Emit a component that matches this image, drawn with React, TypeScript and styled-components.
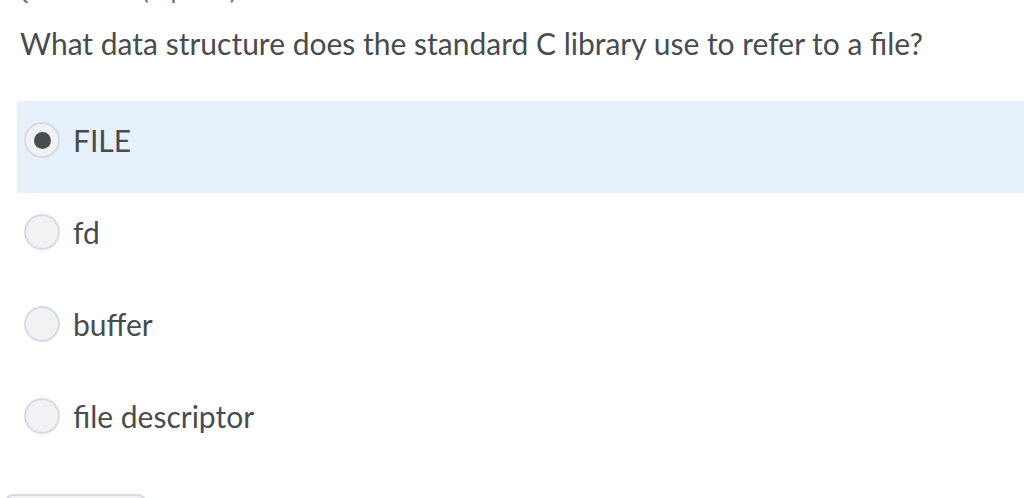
import React, { useState } from 'react';
import styled, { createGlobalStyle } from 'styled-components';

const GlobalStyle = createGlobalStyle`
  html, body {
    margin: 0;
    padding: 0;
    background: #fff;
  }
  body {
    font-family: Lato, "Open Sans", "Liberation Sans", sans-serif;
    color: #494c4e;
    overflow: hidden;
  }
`;

const Page = styled.div`
  width: 1024px;
  height: 498px;
  overflow: hidden;
`;

// bottom edge of the previous question's header, scrolled mostly out of view
const PrevHeader = styled.div`
  height: 3px;
  overflow: hidden;
  padding-left: 8px;
  display: flex;
  align-items: flex-end;
`;

const PrevHeaderText = styled.span`
  font-size: 26px;
  line-height: 26px;
  color: #6e7376;
  margin-bottom: 1px;
  white-space: nowrap;
`;

const Question = styled.h2`
  margin: 0;
  padding: 20px 0 0 20px;
  height: 75px;
  box-sizing: border-box;
  font-size: 30px;
  font-weight: 400;
  line-height: 40px;
  color: #494c4e;
`;

const OptionList = styled.div`
  display: flex;
  flex-direction: column;
  margin-top: 23px;
  margin-left: 17px;
`;

const OptionRow = styled.label<{ $selected: boolean }>`
  display: flex;
  align-items: flex-start;
  gap: 13px;
  height: 92px;
  box-sizing: border-box;
  padding: 21px 0 0 7px;
  background: ${(p) => (p.$selected ? '#e7f1fb' : 'transparent')};
  cursor: pointer;
`;

const Radio = styled.span<{ $checked: boolean }>`
  width: 36px;
  height: 36px;
  box-sizing: border-box;
  border-radius: 50%;
  border: 2px solid #d6dce6;
  background: #f1f2f4;
  display: flex;
  align-items: center;
  justify-content: center;
  flex-shrink: 0;

  &::after {
    content: '';
    width: 17px;
    height: 17px;
    border-radius: 50%;
    background: #494c4e;
    display: ${(p) => (p.$checked ? 'block' : 'none')};
  }
`;

const OptionText = styled.span`
  font-size: 30px;
  line-height: 36px;
  color: #494c4e;
`;

const Footer = styled.div`
  padding: 25px 0 0 5px;
`;

const Button = styled.button`
  width: 141px;
  height: 40px;
  border: 2px solid #d6dce6;
  border-radius: 8px;
  background: #f1f2f4;
`;

const options = ['FILE', 'fd', 'buffer', 'file descriptor'];

export default function App() {
  const [selected, setSelected] = useState(0);

  return (
    <Page>
      <GlobalStyle />
      <PrevHeader>
        <PrevHeaderText>Question 3 (1 point)</PrevHeaderText>
      </PrevHeader>
      <Question>What data structure does the standard C library use to refer to a file?</Question>
      <OptionList>
        {options.map((opt, i) => (
          <OptionRow key={opt} $selected={i === selected} onClick={() => setSelected(i)}>
            <Radio $checked={i === selected} />
            <OptionText>{opt}</OptionText>
          </OptionRow>
        ))}
      </OptionList>
      <Footer>
        <Button aria-label="Next" />
      </Footer>
    </Page>
  );
}
